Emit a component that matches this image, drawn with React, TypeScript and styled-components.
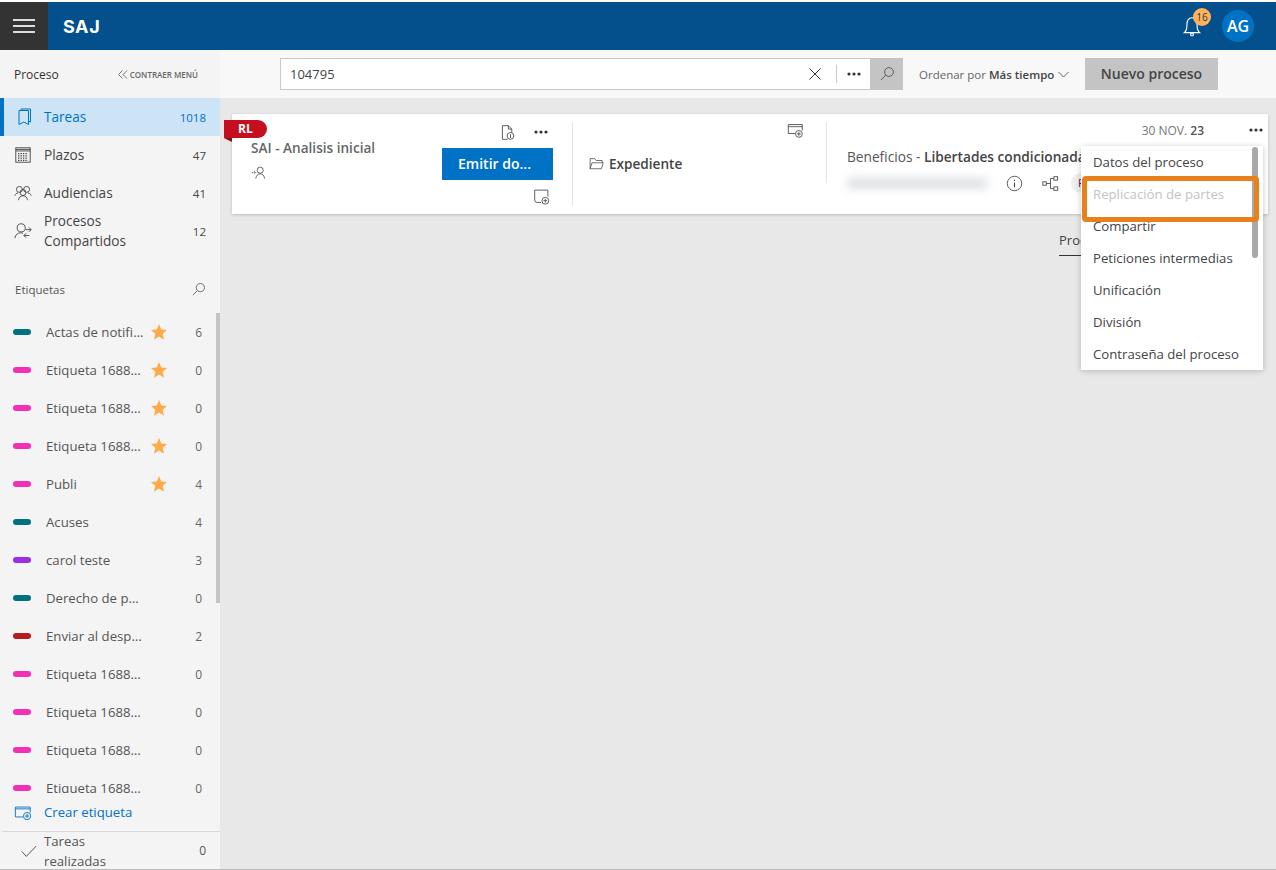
import styled, { createGlobalStyle } from "styled-components";

const TAGS = [
  { name: "Actas de notificación", color: "#00717f", star: true, count: 6 },
  { name: "Etiqueta 168876543", color: "#f32fb5", star: true, count: 0 },
  { name: "Etiqueta 168876544", color: "#f32fb5", star: true, count: 0 },
  { name: "Etiqueta 168876545", color: "#f32fb5", star: true, count: 0 },
  { name: "Publi", color: "#f32fb5", star: true, count: 4 },
  { name: "Acuses", color: "#00717f", star: false, count: 4 },
  { name: "carol teste", color: "#9b2ce8", star: false, count: 3 },
  { name: "Derecho de petición", color: "#00717f", star: false, count: 0 },
  { name: "Enviar al despacho", color: "#b71c1c", star: false, count: 2 },
  { name: "Etiqueta 168876546", color: "#f32fb5", star: false, count: 0 },
  { name: "Etiqueta 168876547", color: "#f32fb5", star: false, count: 0 },
  { name: "Etiqueta 168876548", color: "#f32fb5", star: false, count: 0 },
  { name: "Etiqueta 168876549", color: "#f32fb5", star: false, count: 0 },
];

const MENU = [
  "Datos del proceso",
  "Replicación de partes",
  "Compartir",
  "Peticiones intermedias",
  "Unificación",
  "División",
  "Contraseña del proceso",
];

const Icon = ({ size = 20, color = "#444", children }: { size?: number; color?: string; children: React.ReactNode }) => (
  <svg width={size} height={size} viewBox="0 0 20 20" fill="none" stroke={color} strokeWidth="1">
    {children}
  </svg>
);

const Dots = () => (
  <svg width="14" height="4" viewBox="0 0 14 4" fill="#333">
    <circle cx="2" cy="2" r="1.6" />
    <circle cx="7" cy="2" r="1.6" />
    <circle cx="12" cy="2" r="1.6" />
  </svg>
);

const SearchIcon = ({ size = 16 }: { size?: number }) => (
  <Icon size={size}>
    <circle cx="12.5" cy="7.5" r="5.5" />
    <path d="M8.5 11.5 2.5 17.5" />
  </Icon>
);

// tag icon with the top bar, used next to "Expediente"
const TagAddIcon = () => (
  <Icon size={17}>
    <path d="M9.5 13.5H1.500V3h16.500v7" />
    <path d="M1.500 5.500h16.500" />
    <circle cx="14" cy="14" r="4" />
    <path d="M14 11.800v4.400M11.800 14h4.400" />
  </Icon>
);

// note icon without the bar, under the emit button
const NoteAddIcon = () => (
  <Icon size={17}>
    <path d="M9.500 17H5a3 3 0 0 1-3-3V2.500h15.500V10" />
    <circle cx="14.500" cy="15" r="4" />
    <path d="M14.500 12.800v4.400M12.300 15h4.400" />
  </Icon>
);

export default function App() {
  return (
    <>
      <GlobalStyle />
      <Page>
        <TopBar>
          <MenuButton>
            <span />
            <span />
            <span />
          </MenuButton>
          <Logo>SAJ</Logo>
          <TopRight>
            <BellWrap>
              <Icon size={22} color="#fff">
                <path d="M3 16c1.800-1.500 2.400-3 2.400-7 0-4 1.800-6.500 4.600-6.500s4.600 2.500 4.600 6.500c0 4 .6 5.500 2.400 7z" />
                <circle cx="10" cy="17.800" r="1.300" />
              </Icon>
              <Badge>16</Badge>
            </BellWrap>
            <Avatar>AG</Avatar>
          </TopRight>
        </TopBar>
        <Body>
          <Sidebar>
            <SideHead>
              <SideTitle>Proceso</SideTitle>
              <Collapse>
                <svg width="10" height="9" viewBox="0 0 10 9" fill="none" stroke="#666" strokeWidth="0.9">
                  <path d="M4.500.5.500 4.500l4 4M9 .5l-4 4 4 4" />
                </svg>
                CONTRAER MENÚ
              </Collapse>
            </SideHead>
            <NavItem $active>
              <NavIcon>
                <Icon size={20} color="#0072c6">
                  <path d="M5 3.500h9.500v14l-4.700-2.500L5 17.500z" />
                  <path d="M7 3.500v-1.500h9.500v13l-2-1" />
                </Icon>
              </NavIcon>
              <NavLabel>Tareas</NavLabel>
              <NavCount>1018</NavCount>
            </NavItem>
            <NavItem>
              <NavIcon>
                <Icon size={18}>
                  <rect x="2" y="2" width="16" height="16" />
                  <path d="M2 5.500h16M2 3.800h16" />
                  <path d="M4.500 8.500h11M4.500 11h11M4.500 13.500h11M4.500 16h11" strokeDasharray="1.500 1.200" strokeWidth="1.300" />
                </Icon>
              </NavIcon>
              <NavLabel>Plazos</NavLabel>
              <NavCount>47</NavCount>
            </NavItem>
            <NavItem>
              <NavIcon>
                <Icon size={18}>
                  <circle cx="6" cy="6" r="3.300" />
                  <circle cx="14" cy="6" r="3.300" />
                  <circle cx="10" cy="9.500" r="3.300" />
                  <path d="M1 13c.5-2 2-3 3.500-3M19 13c-.5-2-2-3-3.500-3M5 18c.3-3 2.300-5 5-5s4.700 2 5 5" />
                </Icon>
              </NavIcon>
              <NavLabel>Audiencias</NavLabel>
              <NavCount>41</NavCount>
            </NavItem>
            <NavItem>
              <NavIcon>
                <Icon size={18}>
                  <circle cx="8" cy="6.500" r="4.500" />
                  <path d="M1 18c.5-3.500 2.800-6 6.500-6 1 0 1.800.2 2.500.5" />
                  <path d="M13 8.500h6M16.500 6l2.500 2.500-2.500 2.500M11 15h6M13.500 12.500 11 15l2.500 2.500" />
                </Icon>
              </NavIcon>
              <NavLabel>
                Procesos
                <br />
                Compartidos
              </NavLabel>
              <NavCount>12</NavCount>
            </NavItem>

            <TagsHead>
              <TagsTitle>Etiquetas</TagsTitle>
              <SearchIcon size={15} />
            </TagsHead>
            <TagList>
              {TAGS.map((t, i) => (
                <TagRow key={i}>
                  <TagBar $color={t.color} />
                  <TagName>{t.name}</TagName>
                  <StarSlot>
                    {t.star && (
                      <svg width="16" height="16" viewBox="0 0 16 16" fill="#ffab4a">
                        <path d="M8 0l2.300 5.500 5.700.5-4.300 3.800 1.300 5.900L8 12.600l-5 3.100 1.300-5.900L0 6l5.700-.5z" />
                      </svg>
                    )}
                  </StarSlot>
                  <TagCount>{t.count}</TagCount>
                </TagRow>
              ))}
              <ScrollThumb />
            </TagList>
            <CreateTag>
              <Icon size={18} color="#0072c6">
                <path d="M10 15.500H1.500V4.500h16.500v6" />
                <path d="M1.500 6.500h16.500" />
                <circle cx="14.500" cy="14.500" r="4" />
                <path d="M14.500 12.200v4.600M12.200 14.500h4.600" />
              </Icon>
              Crear etiqueta
            </CreateTag>
            <DoneRow>
              <DoneCheck>
                <Icon size={18}>
                  <path d="M2 10.500 7 16 18 4.500" />
                </Icon>
              </DoneCheck>
              <DoneLabel>
                Tareas
                <br />
                realizadas
              </DoneLabel>
              <DoneCount>0</DoneCount>
            </DoneRow>
          </Sidebar>

          <Main>
            <Toolbar>
              <SearchBox>
                <SearchInput>104795</SearchInput>
                <ClearSlot>
                  <svg width="12" height="12" viewBox="0 0 12 12" stroke="#333" strokeWidth="1">
                    <path d="M.5.500l11 11M11.500.500l-11 11" />
                  </svg>
                </ClearSlot>
                <MoreSlot>
                  <Dots />
                </MoreSlot>
                <SearchButton>
                  <SearchIcon />
                </SearchButton>
              </SearchBox>
              <SortBy>
                <span>
                  Ordenar por <strong>Más tiempo</strong>
                </span>
                <svg width="11" height="7" viewBox="0 0 11 7" fill="none" stroke="#555" strokeWidth="0.9">
                  <path d="M.5 1l5 5 5-5" />
                </svg>
              </SortBy>
              <NewButton>Nuevo proceso</NewButton>
            </Toolbar>

            <Content>
              <Card>
                <Ribbon>RL</Ribbon>
                <TaskSection>
                  <TaskInfo>
                    <TaskTitle>SAI - Analisis inicial</TaskTitle>
                    <Icon size={16}>
                      <circle cx="11.500" cy="6.500" r="3.800" />
                      <path d="M6 17c.4-3.500 2.500-6 5.500-6s5.100 2.500 5.500 6" />
                      <path d="M1 9.500h5M4 7.500l2 2-2 2" strokeDasharray="1.500 0.800" />
                    </Icon>
                  </TaskInfo>
                  <TaskActions>
                    <ActionIcons>
                      <Icon size={17}>
                        <path d="M10 18H4V2h7l4 4v4" />
                        <path d="M11 2v4h4" />
                        <circle cx="13.500" cy="14" r="4" />
                        <path d="M13.500 12v4.500" />
                      </Icon>
                      <Dots />
                    </ActionIcons>
                    <EmitButton>Emitir do...</EmitButton>
                    <BottomIcon>
                      <NoteAddIcon />
                    </BottomIcon>
                  </TaskActions>
                </TaskSection>

                <FileSection>
                  <FileTop>
                    <TagAddIcon />
                  </FileTop>
                  <FileLink>
                    <Icon size={15}>
                      <path d="M1.500 17V3.500h6l2 2.500h8v3" />
                      <path d="M1.500 17l2.500-8h15l-2.500 8z" />
                    </Icon>
                    Expediente
                  </FileLink>
                </FileSection>

                <DetailSection>
                  <DetailTop>
                    <DateText>
                      30 NOV. <b>23</b>
                    </DateText>
                    <Dots />
                  </DetailTop>
                  <DetailTitle>
                    Beneficios - <b>Libertades condicionadas</b>
                  </DetailTitle>
                  <DetailFooter>
                    <BlurredText />
                    <FooterIcons>
                      <Icon size={17}>
                        <circle cx="10" cy="10" r="8.500" />
                        <path d="M10 9v5.500" strokeWidth="1.300" />
                        <path d="M10 5.500v1.500" strokeWidth="1.300" />
                      </Icon>
                      <Icon size={17}>
                        <rect x="1" y="8" width="4" height="4" />
                        <rect x="14" y="2" width="4.500" height="4" />
                        <rect x="14" y="14" width="4.500" height="4" />
                        <path d="M5 10h5M10 4v12M10 4h4M10 16h4" />
                      </Icon>
                      <Pill>F</Pill>
                    </FooterIcons>
                  </DetailFooter>
                </DetailSection>

                <Menu>
                  {MENU.map((m, i) => (
                    <MenuItem key={m} $disabled={i === 1}>
                      {m}
                    </MenuItem>
                  ))}
                  <MenuThumb />
                  <Highlight />
                </Menu>
              </Card>
              <Tabs>
                <Tab>Procesos</Tab>
              </Tabs>
            </Content>
          </Main>
        </Body>
      </Page>
    </>
  );
}

const GlobalStyle = createGlobalStyle`
  html, body {
    margin: 0;
    height: 100%;
    overflow: hidden;
  }
  body {
    font-family: "Open Sans", "Noto Sans", "Liberation Sans", sans-serif;
    font-size: 13px;
    color: #444;
    background: #fff;
  }
  * {
    box-sizing: border-box;
  }
`;

const Page = styled.div`
  height: 870px;
  padding-top: 2px;
  display: flex;
  flex-direction: column;
`;

const TopBar = styled.header`
  height: 48px;
  background: #03508c;
  display: flex;
  align-items: center;
  flex-shrink: 0;
`;

const MenuButton = styled.div`
  width: 48px;
  height: 48px;
  background: #333;
  display: flex;
  flex-direction: column;
  justify-content: center;
  align-items: center;
  gap: 4px;
  span {
    display: block;
    width: 22px;
    height: 2px;
    background: #ddd;
  }
`;

const Logo = styled.div`
  margin-left: 15px;
  color: #fff;
  font-family: Inter, "Open Sans", sans-serif;
  font-size: 18px;
  font-weight: 700;
  letter-spacing: 0.6px;
`;

const TopRight = styled.div`
  margin-left: auto;
  display: flex;
  align-items: center;
  gap: 19px;
  margin-right: 22px;
`;

const BellWrap = styled.div`
  position: relative;
  display: flex;
  width: 22px;
  height: 22px;
`;

const Badge = styled.span`
  position: absolute;
  top: -7px;
  left: 12px;
  width: 18px;
  height: 18px;
  border-radius: 50%;
  background: #ffb25e;
  color: #333;
  font-size: 10px;
  line-height: 18px;
  text-align: center;
`;

const Avatar = styled.div`
  width: 32px;
  height: 32px;
  border-radius: 50%;
  background: #0072c6;
  color: #fff;
  font-size: 16px;
  font-weight: 600;
  line-height: 32px;
  text-align: center;
`;

const Body = styled.div`
  flex: 1;
  display: flex;
  min-height: 0;
  border-bottom: 1px solid #bbb;
`;

const Sidebar = styled.aside`
  width: 220px;
  flex-shrink: 0;
  background: #f4f4f4;
  display: flex;
  flex-direction: column;
  overflow: hidden;
`;

const SideHead = styled.div`
  height: 48px;
  flex-shrink: 0;
  display: flex;
  align-items: center;
  justify-content: space-between;
  padding: 0 22px 0 14px;
`;

const SideTitle = styled.div`
  font-size: 12px;
  color: #333;
`;

const Collapse = styled.div`
  display: flex;
  align-items: center;
  gap: 2px;
  font-size: 8px;
  font-weight: 600;
  color: #666;
`;

const NavItem = styled.div<{ $active?: boolean }>`
  height: 38px;
  flex-shrink: 0;
  display: flex;
  align-items: center;
  padding-right: 14px;
  background: ${(p) => (p.$active ? "#cce4f6" : "transparent")};
  border-left: 4px solid ${(p) => (p.$active ? "#0072c6" : "transparent")};
  color: ${(p) => (p.$active ? "#0072c6" : "#444")};
  font-weight: 500;
`;

const NavIcon = styled.div`
  width: 40px;
  display: flex;
  padding-left: 10px;
`;

const NavLabel = styled.div`
  flex: 1;
  font-size: 13.6px;
  line-height: 20px;
`;

const NavCount = styled.div`
  font-size: 11.5px;
`;

const TagsHead = styled.div`
  height: 38px;
  margin-top: 20px;
  margin-bottom: 5px;
  flex-shrink: 0;
  display: flex;
  align-items: center;
  justify-content: space-between;
  padding: 0 14px 0 15px;
`;

const TagsTitle = styled.div`
  font-size: 11.5px;
  font-weight: 500;
  color: #555;
`;

const TagList = styled.div`
  flex: 1;
  min-height: 0;
  overflow: hidden;
  position: relative;
`;

const ScrollThumb = styled.div`
  position: absolute;
  top: 0;
  right: 0;
  width: 4px;
  height: 290px;
  background: #c4c4c4;
`;

const TagRow = styled.div`
  height: 38px;
  display: flex;
  align-items: center;
  padding-left: 13px;
`;

const TagBar = styled.span<{ $color: string }>`
  width: 18px;
  height: 6px;
  border-radius: 3px;
  background: ${(p) => p.$color};
  flex-shrink: 0;
`;

const TagName = styled.span`
  width: 98px;
  margin-left: 15px;
  font-size: 13.2px;
  color: #555;
  white-space: nowrap;
  overflow: hidden;
  text-overflow: ellipsis;
`;

const StarSlot = styled.span`
  width: 16px;
  height: 16px;
  margin-left: 7px;
  display: flex;
`;

const TagCount = styled.span`
  width: 35px;
  text-align: right;
  font-size: 12px;
  color: #666;
`;

const CreateTag = styled.div`
  height: 38px;
  flex-shrink: 0;
  display: flex;
  align-items: center;
  gap: 12px;
  padding-left: 14px;
  color: #0072c6;
  font-size: 13.2px;
`;

const DoneRow = styled.div`
  height: 38px;
  flex-shrink: 0;
  display: flex;
  align-items: center;
  padding-right: 14px;
  border-top: 1px solid #d8d8d8;
  margin-left: 2px;
`;

const DoneCheck = styled.div`
  width: 42px;
  display: flex;
  padding-left: 18px;
`;

const DoneLabel = styled.div`
  flex: 1;
  padding-top: 1px;
  font-size: 13.2px;
  line-height: 20px;
  color: #555;
  white-space: nowrap;
`;

const DoneCount = styled.div`
  font-size: 12px;
  color: #555;
`;

const Main = styled.main`
  flex: 1;
  min-width: 0;
  background: #e8e8e8;
  display: flex;
  flex-direction: column;
`;

const Toolbar = styled.div`
  height: 48px;
  flex-shrink: 0;
  background: #f8f8f8;
  display: flex;
  align-items: center;
  padding-left: 60px;
`;

const SearchBox = styled.div`
  width: 623px;
  height: 32px;
  display: flex;
  align-items: stretch;
  background: #fff;
  border: 1px solid #c8c8c8;
`;

const SearchInput = styled.div`
  flex: 1;
  padding-left: 9px;
  line-height: 30px;
  font-size: 13px;
  color: #444;
`;

const ClearSlot = styled.div`
  width: 42px;
  display: flex;
  align-items: center;
  justify-content: center;
`;

const MoreSlot = styled.div`
  width: 34px;
  margin: 6px 0;
  border-left: 1px solid #c8c8c8;
  display: flex;
  align-items: center;
  justify-content: center;
`;

const SearchButton = styled.div`
  width: 33px;
  margin: -1px -1px -1px 0;
  background: #c4c4c4;
  display: flex;
  align-items: center;
  justify-content: center;
`;

const SortBy = styled.div`
  width: 166px;
  margin-left: 16px;
  display: flex;
  align-items: center;
  gap: 4px;
  font-size: 11.5px;
  color: #666;
  white-space: nowrap;
  strong {
    color: #444;
    font-weight: 600;
  }
`;

const NewButton = styled.div`
  width: 133px;
  height: 32px;
  background: #c4c4c4;
  color: #444;
  font-size: 14px;
  font-weight: 600;
  line-height: 32px;
  text-align: center;
`;

const Content = styled.div`
  flex: 1;
  padding: 16px 8px 0 12px;
`;

const Card = styled.div`
  position: relative;
  height: 100px;
  background: #fff;
  box-shadow: 0 1px 3px rgba(0, 0, 0, 0.18);
  display: flex;
  align-items: flex-start;
`;

const Ribbon = styled.div`
  position: absolute;
  top: 6px;
  left: -8px;
  width: 43px;
  height: 18px;
  padding-left: 14px;
  background: #c50f1f;
  color: #fff;
  font-size: 12px;
  font-weight: 700;
  line-height: 18px;
  border-radius: 0 9px 9px 0;
  &::after {
    content: "";
    position: absolute;
    left: 0;
    top: 18px;
    border-top: 4px solid #8c0a15;
    border-left: 8px solid transparent;
  }
`;

const TaskSection = styled.section`
  width: 341px;
  height: 84px;
  margin-top: 8px;
  padding: 0 19px;
  border-right: 1px solid #e5e5e5;
  display: flex;
  justify-content: space-between;
  flex-shrink: 0;
`;

const TaskInfo = styled.div`
  padding-top: 16px;
  display: flex;
  flex-direction: column;
  align-items: flex-start;
  gap: 7px;
`;

const TaskTitle = styled.div`
  font-size: 13.6px;
  font-weight: 600;
  color: #666;
  line-height: 20px;
  white-space: nowrap;
`;

const TaskActions = styled.div`
  width: 111px;
  display: flex;
  flex-direction: column;
`;

const ActionIcons = styled.div`
  height: 20px;
  margin-bottom: 6px;
  display: flex;
  align-items: center;
  justify-content: flex-end;
  gap: 18px;
  padding-right: 5px;
`;

const EmitButton = styled.div`
  height: 32px;
  padding-right: 6px;
  background: #0072c6;
  color: #fff;
  font-weight: 600;
  font-size: 14px;
  line-height: 32px;
  text-align: center;
`;

const BottomIcon = styled.div`
  margin-top: 8px;
  display: flex;
  justify-content: flex-end;
  padding-right: 3px;
`;

const FileSection = styled.section`
  width: 254px;
  height: 61px;
  margin-top: 8px;
  padding: 0 22px 0 16px;
  border-right: 1px solid #e5e5e5;
  flex-shrink: 0;
`;

const FileTop = styled.div`
  display: flex;
  justify-content: flex-end;
`;

const FileLink = styled.div`
  margin-top: 15px;
  display: flex;
  align-items: center;
  gap: 5px;
  font-size: 13.6px;
  font-weight: 600;
  color: #444;
`;

const DetailSection = styled.section`
  flex: 1;
  min-width: 0;
  padding: 8px 5px 0 0;
`;

const DetailTop = styled.div`
  height: 16px;
  display: flex;
  align-items: center;
  justify-content: flex-end;
  gap: 45px;
`;

const DateText = styled.div`
  font-size: 12px;
  color: #777;
  b {
    color: #555;
    font-weight: 600;
  }
`;

const DetailTitle = styled.div`
  margin: 9px 0 4px 20px;
  height: 20px;
  font-size: 13.7px;
  line-height: 20px;
  color: #555;
  white-space: nowrap;
  b {
    color: #444;
    font-weight: 600;
  }
`;

const DetailFooter = styled.div`
  height: 24px;
  display: flex;
  align-items: center;
`;

const BlurredText = styled.div`
  width: 140px;
  height: 11px;
  margin-left: 20px;
  background: #dde1e5;
  filter: blur(5px);
`;

const FooterIcons = styled.div`
  margin-left: 19px;
  display: flex;
  align-items: center;
  gap: 19px;
`;

const Pill = styled.span`
  width: 40px;
  height: 20px;
  padding-left: 7px;
  margin-left: -7px;
  border-radius: 10px;
  background: #eee;
  color: #5c0f6b;
  font-size: 11px;
  line-height: 20px;
`;

const Menu = styled.div`
  position: absolute;
  top: 32px;
  left: 849px;
  width: 182px;
  height: 224px;
  background: #fff;
  box-shadow: 0 1px 6px rgba(0, 0, 0, 0.22);
  z-index: 2;
`;

const MenuItem = styled.div<{ $disabled?: boolean }>`
  height: 32px;
  padding-left: 12px;
  font-size: 13.2px;
  line-height: 32px;
  color: ${(p) => (p.$disabled ? "#c4c4c4" : "#444")};
  white-space: nowrap;
`;

const MenuThumb = styled.div`
  position: absolute;
  top: 1px;
  right: 5px;
  width: 6px;
  height: 111px;
  border-radius: 3px;
  background: #a8a8a8;
`;

const Highlight = styled.div`
  position: absolute;
  top: 30px;
  left: 1px;
  width: 177px;
  height: 46px;
  border: 5px solid #e8811c;
  border-radius: 4px;
`;

const Tabs = styled.div`
  margin-top: 16px;
  padding-left: 827px;
  display: flex;
`;

const Tab = styled.div`
  padding-bottom: 5px;
  border-bottom: 1px solid #333;
  font-size: 13px;
  line-height: 20px;
  color: #444;
`;
